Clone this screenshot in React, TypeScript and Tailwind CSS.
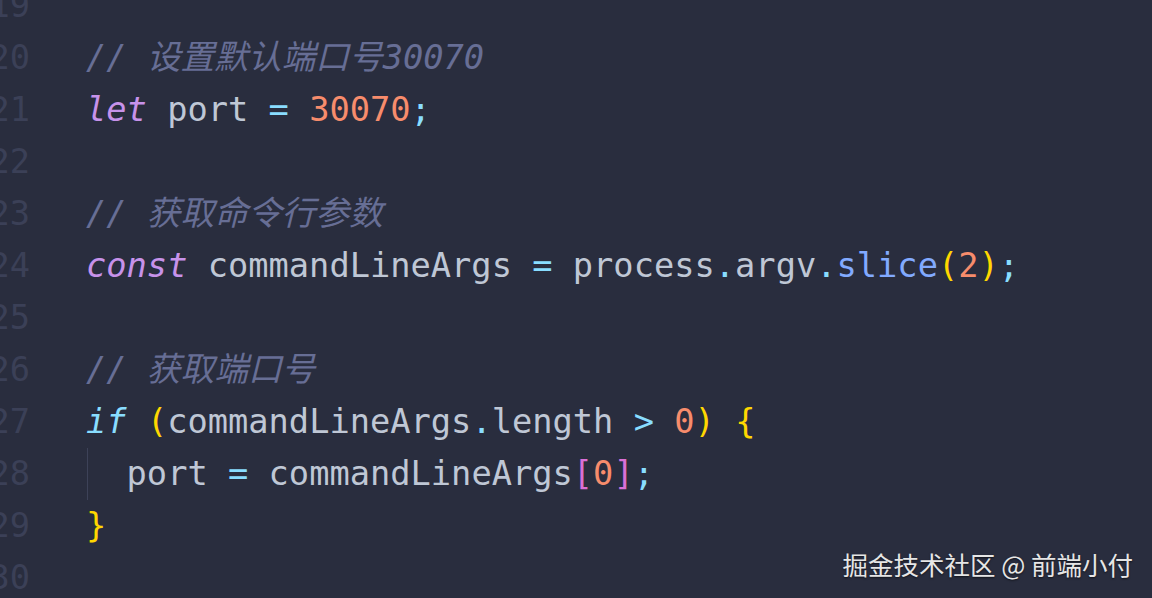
type Tok = { t: string; c: string; i?: boolean };

const V = "text-[#bfc7d5]";
const OP = "text-[#89ddff]";
const NUM = "text-[#f78c6c]";
const KW = "text-[#c792ea]";
const FN = "text-[#82aaff]";
const GOLD = "text-[#ffd700]";
const ORCHID = "text-[#da70d6]";
const CMT = "text-[#676e95]";

const lines: { n: number; toks: Tok[]; guide?: boolean }[] = [
  { n: 19, toks: [] },
  { n: 20, toks: [{ t: "// 设置默认端口号30070", c: CMT, i: true }] },
  {
    n: 21,
    toks: [
      { t: "let", c: KW, i: true },
      { t: " port ", c: V },
      { t: "=", c: OP },
      { t: " ", c: V },
      { t: "30070", c: NUM },
      { t: ";", c: OP },
    ],
  },
  { n: 22, toks: [] },
  { n: 23, toks: [{ t: "// 获取命令行参数", c: CMT, i: true }] },
  {
    n: 24,
    toks: [
      { t: "const", c: KW, i: true },
      { t: " commandLineArgs ", c: V },
      { t: "=", c: OP },
      { t: " process", c: V },
      { t: ".", c: OP },
      { t: "argv", c: V },
      { t: ".", c: OP },
      { t: "slice", c: FN },
      { t: "(", c: GOLD },
      { t: "2", c: NUM },
      { t: ")", c: GOLD },
      { t: ";", c: OP },
    ],
  },
  { n: 25, toks: [] },
  { n: 26, toks: [{ t: "// 获取端口号", c: CMT, i: true }] },
  {
    n: 27,
    toks: [
      { t: "if", c: OP, i: true },
      { t: " ", c: V },
      { t: "(", c: GOLD },
      { t: "commandLineArgs", c: V },
      { t: ".", c: OP },
      { t: "length ", c: V },
      { t: ">", c: OP },
      { t: " ", c: V },
      { t: "0", c: NUM },
      { t: ")", c: GOLD },
      { t: " ", c: V },
      { t: "{", c: GOLD },
    ],
  },
  {
    n: 28,
    guide: true,
    toks: [
      { t: "  port ", c: V },
      { t: "=", c: OP },
      { t: " commandLineArgs", c: V },
      { t: "[", c: ORCHID },
      { t: "0", c: NUM },
      { t: "]", c: ORCHID },
      { t: ";", c: OP },
    ],
  },
  { n: 29, toks: [{ t: "}", c: GOLD }] },
  { n: 30, toks: [] },
];

export default function App() {
  return (
    <div className="relative w-[1152px] h-[598px] overflow-hidden bg-[#292d3e]">
      {/* editor lines, first one half cut off at the top */}
      <div
        className="mt-[-20px] flex flex-col text-[33.7px] leading-[52px] whitespace-pre"
        style={{ fontFamily: '"DejaVu Sans Mono", "Noto Sans CJK SC", monospace' }}
      >
        {lines.map((l) => (
          <div key={l.n} className="flex h-[52px]">
            <div className="ml-[-11px] w-[41px] shrink-0 text-right text-[#3b4057]">{l.n}</div>
            <div className="relative ml-[56px]">
              {l.guide && <div className="absolute left-[1px] top-0 h-full w-[1px] bg-[#3d4258]" />}
              {l.toks.map((k, i) => (
                <span key={i} className={`${k.c} ${k.i ? "italic" : ""}`}>
                  {k.t}
                </span>
              ))}
            </div>
          </div>
        ))}
      </div>
      {/* watermark */}
      <div
        className="absolute right-[19px] bottom-[17px] text-[25.5px] leading-[34px] text-[#e6e6e6] [text-shadow:0_1px_2px_rgba(0,0,0,0.6)]"
        style={{ fontFamily: '"Noto Sans CJK SC", "Noto Sans", sans-serif' }}
      >
        掘金技术社区 @ 前端小付
      </div>
    </div>
  );
}
